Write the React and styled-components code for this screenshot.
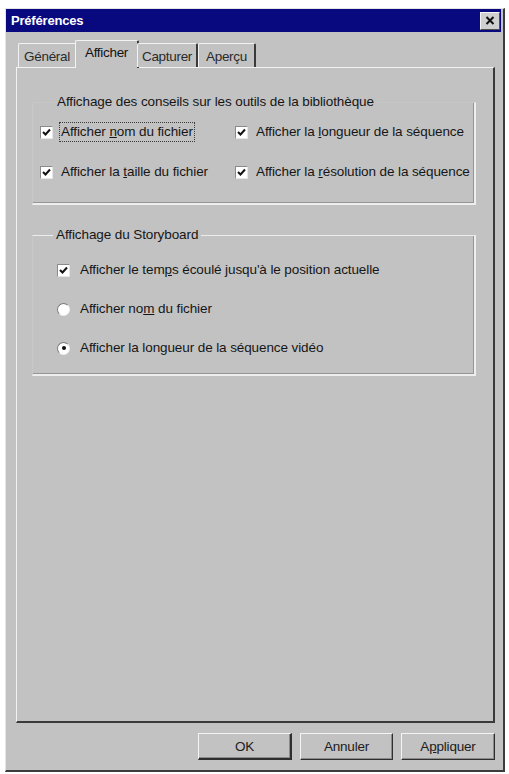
import React from 'react';
import styled, { createGlobalStyle } from 'styled-components';

const Global = createGlobalStyle`
  html, body { margin: 0; padding: 0; background: #ffffff; }
  body { font-family: "Liberation Sans", Arial, sans-serif; color: #161616; }
  * { box-sizing: border-box; }
`;

const Window = styled.div`
  margin: 8px 0 0 5px;
  width: 500px;
  height: 764px;
  background: #c2c2c2;
  border-top: 1px solid #e4e4e4;
  border-left: 1px solid #e4e4e4;
  border-right: 2px solid #3c3c3c;
  border-bottom: 2px solid #3c3c3c;
  display: flex;
  flex-direction: column;
`;

const TitleBar = styled.div`
  height: 23px;
  margin-right: 2px;
  background: #08087f;
  display: flex;
  align-items: center;
  justify-content: space-between;
  padding: 0 1px 0 5px;
`;

const Title = styled.span`
  color: #ffffff;
  font-weight: bold;
  font-size: 13px;
  letter-spacing: -0.2px;
`;

const CloseButton = styled.div`
  width: 20px;
  height: 18px;
  background: #d0d0d0;
  border-top: 1px solid #f4f4f4;
  border-left: 1px solid #f4f4f4;
  border-right: 1px solid #505050;
  border-bottom: 1px solid #505050;
  display: flex;
  align-items: center;
  justify-content: center;
`;

const Body = styled.div`
  flex: 1;
  display: flex;
  flex-direction: column;
  padding: 9px 8px 10px 10px;
`;

const TabRow = styled.div`
  display: flex;
  align-items: flex-end;
  height: 27px;
  padding-left: 2px;
  margin-bottom: -1px;
  position: relative;
  z-index: 1;
`;

const Tab = styled.div`
  width: ${p => p.$w}px;
  height: ${p => (p.$active ? 28 : 24)}px;
  margin: ${p => (p.$active ? '0 -2px 0 -2px' : '0 0 1px 0')};
  background: #c2c2c2;
  border-top: 1px solid #f2f2f2;
  border-left: 1px solid #f2f2f2;
  border-right: 2px solid #3a3a3a;
  border-top-left-radius: 2px;
  border-top-right-radius: 2px;
  display: flex;
  align-items: ${p => (p.$active ? 'flex-start' : 'center')};
  padding-top: ${p => (p.$active ? '4px' : '1px')};
  justify-content: center;
  font-size: 13.5px;
  color: ${p => (p.$active ? '#111' : '#2a2a2a')};
  letter-spacing: -0.3px;
`;

const Panel = styled.div`
  flex: 1;
  border-top: 1px solid #f2f2f2;
  border-left: 1px solid #f2f2f2;
  border-right: 2px solid #3a3a3a;
  border-bottom: 2px solid #3a3a3a;
  padding: 26px 17px 0 15px;
  display: flex;
  flex-direction: column;
  gap: 22px;
`;

const Group = styled.fieldset`
  margin: 0;
  min-width: 0;
  padding: ${p => p.$pad};
  border-style: solid;
  border-width: 1px 2px 2px 1px;
  border-color: ${p => (p.$faint ? '#c6c6c6' : '#ececec')} #eeeeee #eeeeee #c8c8c8;
  box-shadow: inset -1px -1px 0 #959595;
`;

const Legend = styled.legend`
  margin-left: ${p => p.$ml}px;
  padding: 0 3px;
  font-size: 13.5px;
  line-height: 16px;
  letter-spacing: -0.1px;
`;

const CheckGrid = styled.div`
  display: grid;
  grid-template-columns: 195px 1fr;
  row-gap: 20px;
`;

const Stack = styled.div`
  display: flex;
  flex-direction: column;
  gap: 19px;
  padding-left: 24px;
`;

const Option = styled.label`
  display: flex;
  align-items: center;
  gap: ${p => p.$gap || 6}px;
  height: 20px;
  font-size: 13.5px;
  letter-spacing: -0.1px;
  white-space: nowrap;
`;

const LabelText = styled.span`
  display: inline-block;
  height: 20px;
  line-height: 18px;
  padding: 0 1px;
  border: 1px dotted ${p => (p.$focus ? '#3a3a3a' : 'transparent')};
`;

const Box = styled.span`
  width: 13px;
  height: 13px;
  flex: none;
  background: #ffffff;
  border-top: 1px solid #8a8a8a;
  border-left: 1px solid #8a8a8a;
  border-right: 1px solid #e6e6e6;
  border-bottom: 1px solid #e6e6e6;
  display: flex;
  align-items: center;
  justify-content: center;
`;

const Radio = styled.span`
  width: 13px;
  height: 13px;
  flex: none;
  border-radius: 50%;
  background: #ffffff;
  border: 1px solid;
  border-color: #7a7a7a #f0f0f0 #f0f0f0 #7a7a7a;
  display: flex;
  align-items: center;
  justify-content: center;
  &::after {
    content: '';
    width: 4px;
    height: 4px;
    border-radius: 50%;
    background: ${p => (p.$on ? '#111' : 'transparent')};
  }
`;

const ButtonRow = styled.div`
  display: flex;
  justify-content: flex-end;
  gap: 8px;
  margin-top: 10px;
`;

const Button = styled.div`
  width: ${p => p.$w}px;
  height: 27px;
  background: #c2c2c2;
  border-top: 1px solid #f4f4f4;
  border-left: 1px solid #f4f4f4;
  border-right: ${p => (p.$default ? '2px' : '1px')} solid #2e2e2e;
  border-bottom: ${p => (p.$default ? '2px' : '1px')} solid #2e2e2e;
  box-shadow: inset -1px -1px 0 #8a8a8a;
  display: flex;
  align-items: center;
  justify-content: center;
  font-size: 13.5px;
  letter-spacing: -0.2px;
  color: #202020;
`;

const Check = () => (
  <svg width="9" height="9" viewBox="0 0 9 9">
    <polyline points="1,4 3.5,6.5 8,1.5" fill="none" stroke="#111" strokeWidth="2" />
  </svg>
);

const CheckOption = ({ children, focus, gap }) => (
  <Option $gap={gap}>
    <Box><Check /></Box>
    <LabelText $focus={focus}>{children}</LabelText>
  </Option>
);

const RadioOption = ({ children, on, gap }) => (
  <Option $gap={gap}>
    <Radio $on={on} />
    <LabelText>{children}</LabelText>
  </Option>
);

export default function App() {
  return (
    <>
      <Global />
      <Window>
        <TitleBar>
          <Title>Préférences</Title>
          <CloseButton>
            <svg width="10" height="9" viewBox="0 0 10 9">
              <path d="M1.5 1 L8.5 8 M8.5 1 L1.5 8" stroke="#111" strokeWidth="2" />
            </svg>
          </CloseButton>
        </TitleBar>
        <Body>
          <TabRow>
            <Tab $w={59}>Général</Tab>
            <Tab $w={64} $active>Afficher</Tab>
            <Tab $w={61}>Capturer</Tab>
            <Tab $w={58}>Aperçu</Tab>
          </TabRow>
          <Panel>
            <Group $faint $pad="12px 8px 21px 7px">
              <Legend $ml={14}>Affichage des conseils sur les outils de la bibliothèque</Legend>
              <CheckGrid>
                <CheckOption focus>Afficher <u>n</u>om du fichier</CheckOption>
                <CheckOption>Afficher la <u>l</u>ongueur de la séquence</CheckOption>
                <CheckOption>Afficher la <u>t</u>aille du fichier</CheckOption>
                <CheckOption>Afficher la <u>r</u>ésolution de la séquence</CheckOption>
              </CheckGrid>
            </Group>
            <Group $pad="17px 8px 16px 0">
              <Legend $ml={20}>Affichage du Storyboard</Legend>
              <Stack>
                <CheckOption gap={8}>Afficher le tem<u>p</u>s écoulé jusqu'à le position actuelle</CheckOption>
                <RadioOption gap={8}>Afficher no<u>m</u> du fichier</RadioOption>
                <RadioOption gap={8} on>Afficher la longueur de la séquence vidéo</RadioOption>
              </Stack>
            </Group>
          </Panel>
          <ButtonRow>
            <Button $w={94} $default>OK</Button>
            <Button $w={93}>Annuler</Button>
            <Button $w={94}>A<u>p</u>pliquer</Button>
          </ButtonRow>
        </Body>
      </Window>
    </>
  );
}
